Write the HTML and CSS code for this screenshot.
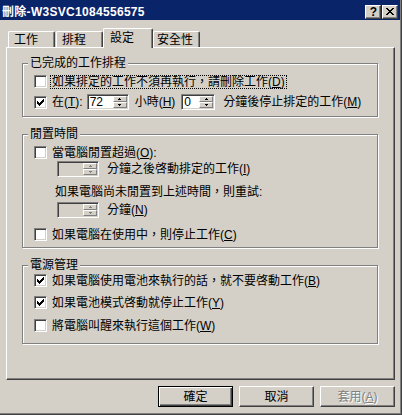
FILE: index.html
```html
<!DOCTYPE html>
<html lang="zh-Hant">
<head>
    <meta charset="UTF-8">
    <title>刪除-W3SVC1084556575</title>
    <link rel="stylesheet" href="styles.css">
</head>
<body>
    <div class="window">
        <div class="titlebar">
            <span class="title">刪除-W3SVC1084556575</span>
            <div class="caption">
                <span class="cap-btn help">?</span>
                <span class="cap-btn">
                    <svg width="8" height="7" viewBox="0 0 8 7" shape-rendering="crispEdges">
                        <path d="M0 0h2v1H0zM6 0h2v1H6zM1 1h2v1H1zM5 1h2v1H5zM2 2h4v1H2zM3 3h2v1H3zM2 4h4v1H2zM1 5h2v1H1zM5 5h2v1H5zM0 6h2v1H0zM6 6h2v1H6z"/>
                    </svg>
                </span>
            </div>
        </div>

        <div class="tabs">
            <span class="tab">工作</span>
            <span class="tab">排程</span>
            <span class="tab active">設定</span>
            <span class="tab wide">安全性</span>
        </div>

        <div class="panel">
            <fieldset class="group">
                <legend>已完成的工作排程</legend>
                <div class="group-body done">
                    <div class="row">
                        <span class="check"></span>
                        <span class="label focus">如果排定的工作不須再執行，請刪除工作(<u>D</u>)</span>
                    </div>
                    <div class="row spin-row">
                        <span class="check"><svg width="7" height="7" viewBox="0 0 7 7" shape-rendering="crispEdges"><path d="M0 2h1v1h1v1h1v-1h1v-1h1v-1h1v-1h1v3h-1v1h-1v1h-1v1h-1v1h-1v-1h-1v-1h-1z"/></svg></span>
                        <span class="label">在(<u>T</u>):</span>
                        <span class="spin hours">
                            <span class="spin-value">72</span>
                            <span class="spin-btns">
                                <span class="spin-btn"><svg width="3" height="2" viewBox="0 0 3 2" shape-rendering="crispEdges"><path d="M1 0h1v1h1v1H0V1h1z"/></svg></span>
                                <span class="spin-btn"><svg width="3" height="2" viewBox="0 0 3 2" shape-rendering="crispEdges"><path d="M0 0h3v1H2v1H1V1H0z"/></svg></span>
                            </span>
                        </span>
                        <span class="after-spin">小時(<u>H</u>)</span>
                        <span class="spin small">
                            <span class="spin-value">0</span>
                            <span class="spin-btns">
                                <span class="spin-btn"><svg width="3" height="2" viewBox="0 0 3 2" shape-rendering="crispEdges"><path d="M1 0h1v1h1v1H0V1h1z"/></svg></span>
                                <span class="spin-btn"><svg width="3" height="2" viewBox="0 0 3 2" shape-rendering="crispEdges"><path d="M0 0h3v1H2v1H1V1H0z"/></svg></span>
                            </span>
                        </span>
                        <span class="after-spin wide-gap">分鐘後停止排定的工作(<u>M</u>)</span>
                    </div>
                </div>
            </fieldset>

            <fieldset class="group">
                <legend>閒置時間</legend>
                <div class="group-body idle">
                    <div class="row">
                        <span class="check"></span>
                        <span class="label">當電腦閒置超過(<u>O</u>):</span>
                    </div>
                    <div class="row spin-row indent first-spin">
                        <span class="spin disabled">
                            <span class="spin-value"></span>
                            <span class="spin-btns">
                                <span class="spin-btn"><svg width="3" height="2" viewBox="0 0 3 2" shape-rendering="crispEdges"><path d="M1 0h1v1h1v1H0V1h1z"/></svg></span>
                                <span class="spin-btn"><svg width="3" height="2" viewBox="0 0 3 2" shape-rendering="crispEdges"><path d="M0 0h3v1H2v1H1V1H0z"/></svg></span>
                            </span>
                        </span>
                        <span class="after-spin">分鐘之後啓動排定的工作(<u>I</u>)</span>
                    </div>
                    <div class="row retry">如果電腦尚未閒置到上述時間，則重試:</div>
                    <div class="row spin-row indent second-spin">
                        <span class="spin disabled">
                            <span class="spin-value"></span>
                            <span class="spin-btns">
                                <span class="spin-btn"><svg width="3" height="2" viewBox="0 0 3 2" shape-rendering="crispEdges"><path d="M1 0h1v1h1v1H0V1h1z"/></svg></span>
                                <span class="spin-btn"><svg width="3" height="2" viewBox="0 0 3 2" shape-rendering="crispEdges"><path d="M0 0h3v1H2v1H1V1H0z"/></svg></span>
                            </span>
                        </span>
                        <span class="after-spin">分鐘(<u>N</u>)</span>
                    </div>
                    <div class="row busy">
                        <span class="check"></span>
                        <span class="label">如果電腦在使用中，則停止工作(<u>C</u>)</span>
                    </div>
                </div>
            </fieldset>

            <fieldset class="group">
                <legend>電源管理</legend>
                <div class="group-body power">
                    <div class="row">
                        <span class="check"><svg width="7" height="7" viewBox="0 0 7 7" shape-rendering="crispEdges"><path d="M0 2h1v1h1v1h1v-1h1v-1h1v-1h1v-1h1v3h-1v1h-1v1h-1v1h-1v1h-1v-1h-1v-1h-1z"/></svg></span>
                        <span class="label">如果電腦使用電池來執行的話，就不要啓動工作(<u>B</u>)</span>
                    </div>
                    <div class="row">
                        <span class="check"><svg width="7" height="7" viewBox="0 0 7 7" shape-rendering="crispEdges"><path d="M0 2h1v1h1v1h1v-1h1v-1h1v-1h1v-1h1v3h-1v1h-1v1h-1v1h-1v1h-1v-1h-1v-1h-1z"/></svg></span>
                        <span class="label">如果電池模式啓動就停止工作(<u>Y</u>)</span>
                    </div>
                    <div class="row last">
                        <span class="check"></span>
                        <span class="label">將電腦叫醒來執行這個工作(<u>W</u>)</span>
                    </div>
                </div>
            </fieldset>
        </div>

        <div class="buttons">
            <span class="btn default">確定</span>
            <span class="btn">取消</span>
            <span class="btn disabled">套用(<u>A</u>)</span>
        </div>
    </div>
</body>
</html>
```

FILE: styles.css
```css
*{
    box-sizing: border-box;
}
body{
    margin: 0;
    background: #d4d0c8;
    color: #000;
    font-family: "Liberation Sans", "Noto Sans CJK TC", sans-serif;
    font-size: 12px;
    line-height: 14px;
}
u{
    text-decoration: underline;
    text-underline-offset: 1px;
}

/* window frame */
.window{
    width: 402px;
    height: 415px;
    padding-right: 1px;
    border-right: 1px solid #404040;
    border-bottom: 1px solid #404040;
    box-shadow: inset -1px -1px 0 #808080;
}
.titlebar{
    height: 20px;
    padding: 3px 2px 0 2px;
    background: #0a246a;
    display: flex;
    align-items: center;
}
.title{
    color: #fff;
    font-weight: bold;
    font-size: 12px;
    letter-spacing: 0.3px;
}
.caption{
    margin-left: auto;
    display: flex;
    gap: 1px;
}
.cap-btn{
    width: 16px;
    height: 14px;
    background: #d4d0c8;
    border: 1px solid;
    border-color: #fff #404040 #404040 #fff;
    box-shadow: inset -1px -1px 0 #808080;
    display: flex;
    align-items: center;
    justify-content: center;
}
.cap-btn.help{
    font-weight: bold;
    font-size: 12px;
    line-height: 12px;
    padding-left: 1px;
}

/* tabs */
.tabs{
    height: 19px;
    margin-top: 8px;
    padding-left: 8px;
    display: flex;
    align-items: flex-end;
}
.tab{
    height: 16px;
    padding: 1px 16px 0 5px;
    margin-right: 1px;
    border-top: 1px solid #fff;
    border-left: 1px solid #fff;
    border-right: 1px solid #404040;
    border-radius: 2px 2px 0 0;
    box-shadow: inset -1px 0 0 #808080;
    line-height: 14px;
}
.tab.active{
    height: 20px;
    padding: 2px 18px 0 6px;
    margin: 0 0 -1px -1px;
    position: relative;
    z-index: 1;
    background: #d4d0c8;
}
.tab.wide{
    padding: 1px 6px 0 3px;
}

/* tab page */
.panel{
    margin-left: 6px;
    width: 389px;
    height: 333px;
    padding: 8px 16px 0 15px;
    border: 1px solid;
    border-color: #fff #404040 #404040 #fff;
    box-shadow: inset -1px -1px 0 #808080;
}
.group{
    margin: 0;
    padding: 0;
    min-width: 0;
    border: 1px solid #808080;
    box-shadow: inset 1px 1px 0 #fff, 1px 1px 0 #fff;
}
.group + .group{
    margin-top: 10px;
}
.group legend{
    margin-left: 5px;
    padding: 0 2px;
    background: #d4d0c8;
    line-height: 14px;
}
.group-body{
    padding-left: 11px;
}
.group-body.done{
    padding-top: 4px;
    padding-bottom: 6px;
}
.group-body.idle{
    padding-top: 4px;
    padding-bottom: 5px;
}
.group-body.power{
    padding-top: 1px;
    padding-bottom: 10px;
}

.row{
    height: 15px;
    display: flex;
    align-items: center;
    white-space: nowrap;
}
.spin-row{
    height: 16px;
}
.done .spin-row{
    margin-top: 5px;
}
.indent{
    margin-left: 23px;
}
.first-spin{
    margin-top: 1px;
}
.retry{
    margin-top: 7px;
    margin-left: 21px;
}
.second-spin{
    margin-top: 3px;
}
.busy{
    margin-top: 9px;
}
.power .row + .row{
    margin-top: 7px;
}
.power .row.last{
    margin-top: 8px;
}

/* checkbox */
.check{
    width: 13px;
    height: 13px;
    flex: none;
    padding: 1px;
    background: #fff;
    border: 1px solid;
    border-color: #808080 #fff #fff #808080;
    box-shadow: inset 1px 1px 0 #404040, inset -1px -1px 0 #d4d0c8;
    display: flex;
    align-items: center;
    justify-content: center;
}
.label{
    margin-left: 5px;
}
.label.focus{
    margin-left: 3px;
    padding: 0 1px;
    border: 1px dotted #000;
    line-height: 12px;
}

/* up-down edit */
.spin{
    width: 42px;
    height: 16px;
    flex: none;
    padding: 1px;
    display: flex;
    background: #fff;
    border: 1px solid;
    border-color: #808080 #fff #fff #808080;
    box-shadow: inset 1px 1px 0 #404040, inset -1px -1px 0 #d4d0c8;
}
.spin.hours{
    margin-left: 4px;
}
.spin.small{
    width: 34px;
    margin-left: 6px;
}
.spin.disabled{
    background: #d4d0c8;
}
.spin.disabled svg{
    fill: #808080;
}
.spin-value{
    flex: 1;
    padding-left: 1px;
    line-height: 12px;
}
.spin-btns{
    width: 14px;
    display: flex;
    flex-direction: column;
}
.spin-btn{
    flex: 1;
    background: #d4d0c8;
    border: 1px solid;
    border-color: #fff #808080 #808080 #fff;
    display: flex;
    align-items: center;
    justify-content: center;
}
.after-spin{
    margin-left: 6px;
}
.after-spin.wide-gap{
    margin-left: 8px;
}
.indent .after-spin{
    margin-left: 8px;
}

/* dialog buttons */
.buttons{
    margin-top: 6px;
    padding-right: 5px;
    display: flex;
    justify-content: flex-end;
    gap: 6px;
}
.btn{
    width: 75px;
    height: 21px;
    background: #d4d0c8;
    border: 1px solid;
    border-color: #fff #404040 #404040 #fff;
    box-shadow: inset -1px -1px 0 #808080;
    display: flex;
    align-items: center;
    justify-content: center;
}
.btn.default{
    border-color: #000;
    box-shadow: inset 1px 1px 0 #fff, inset -1px -1px 0 #404040, inset -2px -2px 0 #808080;
}
.btn.disabled{
    color: #808080;
    text-shadow: 1px 1px 0 #fff;
}
```
